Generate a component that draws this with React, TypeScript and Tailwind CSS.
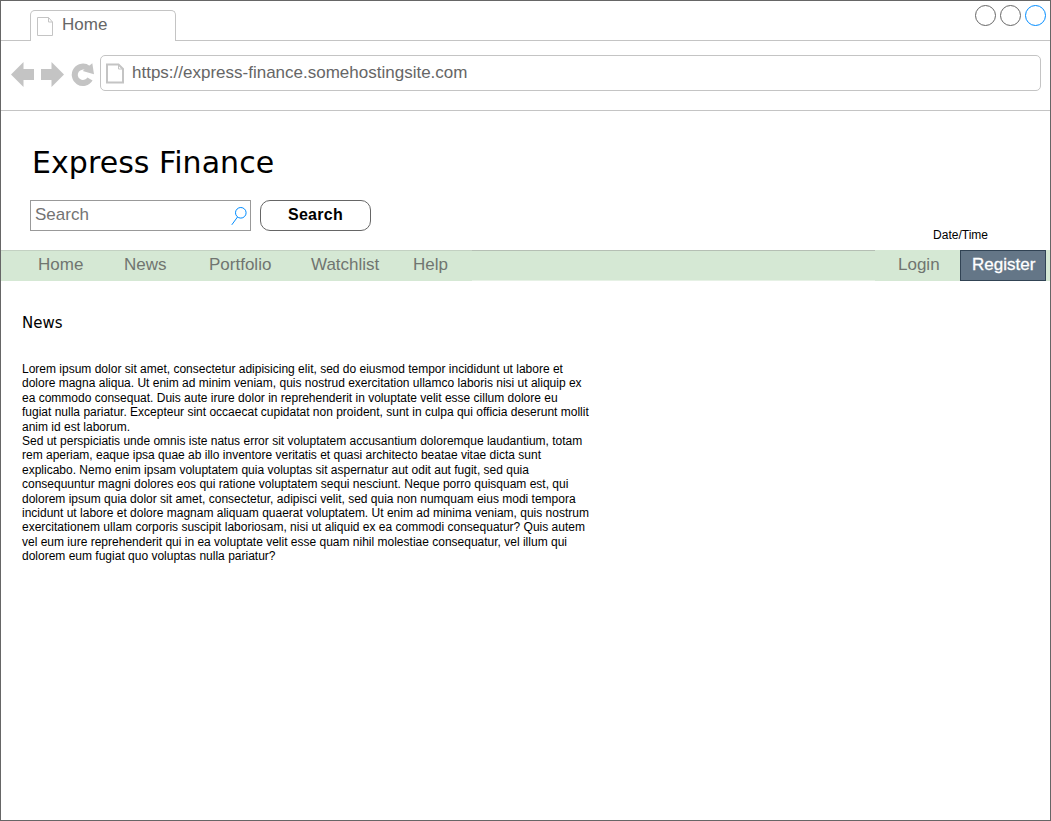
import React from "react";

const lorem = [
  "Lorem ipsum dolor sit amet, consectetur adipisicing elit, sed do eiusmod tempor incididunt ut labore et",
  "dolore magna aliqua. Ut enim ad minim veniam, quis nostrud exercitation ullamco laboris nisi ut aliquip ex",
  "ea commodo consequat. Duis aute irure dolor in reprehenderit in voluptate velit esse cillum dolore eu",
  "fugiat nulla pariatur. Excepteur sint occaecat cupidatat non proident, sunt in culpa qui officia deserunt mollit",
  "anim id est laborum.",
  "Sed ut perspiciatis unde omnis iste natus error sit voluptatem accusantium doloremque laudantium, totam",
  "rem aperiam, eaque ipsa quae ab illo inventore veritatis et quasi architecto beatae vitae dicta sunt",
  "explicabo. Nemo enim ipsam voluptatem quia voluptas sit aspernatur aut odit aut fugit, sed quia",
  "consequuntur magni dolores eos qui ratione voluptatem sequi nesciunt. Neque porro quisquam est, qui",
  "dolorem ipsum quia dolor sit amet, consectetur, adipisci velit, sed quia non numquam eius modi tempora",
  "incidunt ut labore et dolore magnam aliquam quaerat voluptatem. Ut enim ad minima veniam, quis nostrum",
  "exercitationem ullam corporis suscipit laboriosam, nisi ut aliquid ex ea commodi consequatur? Quis autem",
  "vel eum iure reprehenderit qui in ea voluptate velit esse quam nihil molestiae consequatur, vel illum qui",
  "dolorem eum fugiat quo voluptas nulla pariatur?",
];

function TabStrip() {
  return (
    <div className="flex h-[40px] items-end">
      <div className="h-px w-[29px] bg-[#c4c4c4]" />
      <div className="flex h-[31px] w-[146px] rounded-t-[5px] border border-b-0 border-[#c4c4c4]">
        <svg className="ml-[6px] mt-[6px] h-[20px] w-[17px]" viewBox="0 0 17 20" fill="none" stroke="#c4c4c4">
          <path d="M.5 .5H11.5L15.500 5V18.5H.5ZM11.5 .5V5H15.500" />
        </svg>
        <span className="ml-[8px] mt-[4px] text-[17px] leading-[20px]">Home</span>
      </div>
      <div className="h-px flex-1 bg-[#c4c4c4]" />
    </div>
  );
}

function AddressRow() {
  return (
    <div className="flex h-[70px] border-b border-[#c4c4c4] pl-[9px] pt-[14px]">
      <svg className="mt-[6px] h-[28px] w-[90px] shrink-0" viewBox="10 61 90 28">
        <path fill="#c4c4c4" d="M11 74.500L23.500 62V69H34V80H23.500V87ZM64 74.500L51.500 62V69H41V80H51.500V87Z" />
        <path d="M88 68.300A8.200 8.200 0 1 0 90 79" fill="none" stroke="#c4c4c4" strokeWidth="6" />
        <path fill="#c4c4c4" d="M92.300 63.300L94 74.200L82.700 71Z" />
      </svg>
      <div className="flex h-[36px] w-[941px] rounded-[5px] border border-[#c4c4c4]">
        <svg className="ml-[5px] mt-[7px] h-[21px] w-[19px]" viewBox="0 0 19 21" fill="none" stroke="#c4c4c4">
          <path strokeWidth="2" d="M1 1.500H12.500L17 6V19.500H1Z" />
          <path d="M12.500 1.500V6H17" />
        </svg>
        <span className="ml-[7px] mt-[7px] text-[17px] leading-[20px]">https://express-finance.somehostingsite.com</span>
      </div>
    </div>
  );
}

function SiteHeader() {
  return (
    <header className="flex h-[139px] justify-between">
      <div className="pl-[29px]">
        <h1 className="ml-[2px] mt-[34px] font-['DejaVu_Sans',sans-serif] text-[30px] leading-[36px] tracking-[0.05px] text-black">
          Express Finance
        </h1>
        <div className="mt-[19px] flex gap-[9px]">
          <div className="flex h-[31px] w-[221px] justify-between border border-[#999999] pl-[4px] pr-[2px]">
            <span className="mt-[4px] text-[17px] leading-[20px] text-[#737373]">Search</span>
            <svg className="mt-[5px] h-[20px] w-[17px]" viewBox="0 0 17 20" fill="none" stroke="#008cff">
              <circle cx="9.800" cy="6.800" r="5.300" />
              <path d="M6.500 11L.8 18.800" />
            </svg>
          </div>
          <button className="h-[31px] w-[111px] rounded-[10px] border border-[#666666] pb-px text-[16px] font-bold tracking-[0.3px] text-black">
            Search
          </button>
        </div>
      </div>
      <span className="mr-[62px] mt-[117px] text-[12px] leading-[14px] text-black">Date/Time</span>
    </header>
  );
}

function NavBar() {
  return (
    <nav className="-mx-px flex h-[31px] border-x border-[#b7c0b6] bg-[#d5e8d4] text-[17px] leading-[20px] text-[#707570]">
      <div className="flex w-[471px] border-t border-[#c3d1c2] pl-[37px] pt-[4px]">
        <span className="w-[86px]">Home</span>
        <span className="w-[85px]">News</span>
        <span className="w-[102px]">Portfolio</span>
        <span className="w-[102px]">Watchlist</span>
        <span>Help</span>
      </div>
      <div className="flex-1 border-y border-b-[#e6f1e5] border-t-[#b5bfb4]" />
      <span className="w-[85px] pl-[23px] pt-[5px]">Login</span>
      <span className="mr-[4px] w-[86px] border border-[#314354] bg-[#647687] pl-[11px] pt-[4px] text-white [-webkit-text-stroke:0.3px_white]">
        Register
      </span>
    </nav>
  );
}

export default function App() {
  return (
    <div className="h-[821px] w-[1051px] overflow-hidden border border-[#666666] bg-white font-['Liberation_Sans',sans-serif] text-[#666666]">
      <TabStrip />
      <div className="absolute left-[975px] top-[5px] flex gap-[4px]">
        <div className="size-[21px] rounded-full border border-[#666666]" />
        <div className="size-[21px] rounded-full border border-[#666666]" />
        <div className="size-[21px] rounded-full border border-[#008cff]" />
      </div>
      <AddressRow />
      <SiteHeader />
      <NavBar />
      <main className="pl-[21px] text-black">
        <h2 className="mt-[33px] font-['DejaVu_Sans',sans-serif] text-[15px] leading-[18px]">News</h2>
        <div className="mt-[30px] text-[12px] leading-[14.4px]">
          {lorem.map((text) => (
            <p key={text} className="whitespace-nowrap">{text}</p>
          ))}
        </div>
      </main>
    </div>
  );
}
